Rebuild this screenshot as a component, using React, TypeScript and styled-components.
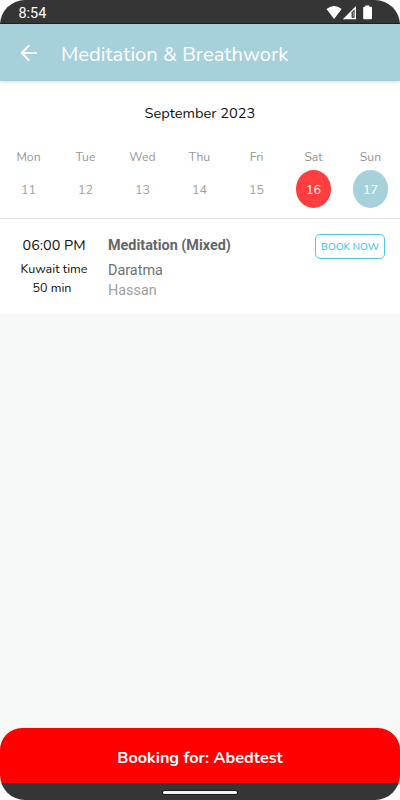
import React from "react";
import styled, { createGlobalStyle } from "styled-components";

const GlobalStyle = createGlobalStyle`
  * { box-sizing: border-box; }
  body { margin: 0; background: #fff; }
`;

const rounded = `Nunito, "Open Sans", "Noto Sans", sans-serif`;

const Screen = styled.div`
  width: 400px;
  height: 800px;
  display: flex;
  flex-direction: column;
  overflow: hidden;
  border-radius: 25px;
  background: #f7f9f8;
  font-family: ${rounded};
`;

const StatusBar = styled.div`
  flex: none;
  height: 24px;
  display: flex;
  align-items: center;
  justify-content: space-between;
  padding: 2px 27px 0 18.5px;
  background: #353535;
  border-bottom: 1px solid #202020;
  color: #fff;
`;

const Clock = styled.span`
  padding-top: 2px;
  font: 400 14.4px/20px Roboto, sans-serif;
`;

const Header = styled.header`
  flex: none;
  position: relative;
  height: 57px;
  display: flex;
  align-items: center;
  padding: 1px 0 0 20px;
  gap: 23px;
  background: #a7d1da;
  box-shadow: 0 1px 3px rgba(0, 0, 0, 0.16);
  color: #fff;
`;

const Title = styled.h1`
  margin: 0;
  padding-top: 3px;
  font-weight: 400;
  font-size: 20.2px;
  line-height: 26px;
  white-space: nowrap;
`;

const Calendar = styled.section`
  flex: none;
  height: 138px;
  background: #fff;
  border-bottom: 1px solid #e6e6e6;
`;

const Month = styled.div`
  padding-top: 22px;
  line-height: 20px;
  font-size: 14.6px;
  text-align: center;
  color: #111;
`;

const Week = styled.div`
  display: grid;
  grid-template-columns: repeat(7, 57px);
  margin-top: 24px;
`;

const Day = styled.div`
  display: flex;
  flex-direction: column;
  align-items: center;
  color: #969696;
  font-size: 12.2px;
  line-height: 21px;
`;

const DayNumber = styled.span<{ $fill?: string }>`
  width: 35.5px;
  height: 37.5px;
  margin-top: 2px;
  padding-top: 1px;
  border-radius: 50%;
  display: flex;
  align-items: center;
  justify-content: center;
  background: ${(p) => p.$fill ?? "transparent"};
  color: ${(p) => (p.$fill ? "#fff" : "#a0a0a0")};
  font-size: 12.5px;
`;

const ClassRow = styled.section`
  flex: none;
  height: 95px;
  display: flex;
  align-items: flex-start;
  background: #fff;
`;

const TimeColumn = styled.div`
  width: 108px;
  padding-top: 15px;
  display: flex;
  flex-direction: column;
  align-items: center;
  color: #111;
`;

const Time = styled.div`
  font-size: 14.4px;
  line-height: 22px;
`;

const TimeNote = styled.div`
  font-size: 12.5px;
  line-height: 19px;
  padding-top: 3px;
  & + & { padding: 0 4px 0 0; }
`;

const Details = styled.div`
  flex: 1;
  padding-top: 16px;
  font-family: Roboto, sans-serif;
  font-size: 14.4px;
  line-height: 20px;
`;

const ClassName = styled.div`
  font-weight: 700;
  line-height: 21px;
  color: #666;
`;

const Teacher = styled.div`
  margin-top: 5px;
  color: #707070;
`;

const Surname = styled.div`
  line-height: 19px;
  color: #a0a0a0;
`;

const BookButton = styled.button`
  width: 70px;
  height: 25px;
  margin: 15px 15px 0 0;
  padding: 1px 0 0;
  border: 1px solid #4fcde5;
  border-radius: 5px;
  background: #fff;
  color: #1fc4e0;
  font-family: ${rounded};
  font-size: 10.2px;
  line-height: 22px;
  white-space: nowrap;
`;

const Spacer = styled.div`
  flex: 1;
`;

const BookingBar = styled.button`
  flex: none;
  height: 56px;
  width: 100%;
  border: 0;
  border-bottom: 1px solid #173f40;
  background: #f00;
  border-radius: 22px 22px 0 0;
  padding: 4px 0 0;
  color: #fff;
  font-family: ${rounded};
  font-weight: 700;
  font-size: 16.2px;
`;

const NavBar = styled.div`
  flex: none;
  height: 16px;
  display: flex;
  justify-content: center;
  align-items: center;
  padding-top: 1px;
  background: #353535;
`;

const HomeHandle = styled.div`
  width: 74px;
  height: 3px;
  border-radius: 2px;
  background: #f4f0ea;
  box-shadow: 0 0 0 1px #1c1c1c;
`;

const days = [
  { name: "Mon", date: 11 },
  { name: "Tue", date: 12 },
  { name: "Wed", date: 13 },
  { name: "Thu", date: 14 },
  { name: "Fri", date: 15 },
  { name: "Sat", date: 16, fill: "#ff3e40" },
  { name: "Sun", date: 17, fill: "#a7d1da" },
];

function StatusIcons() {
  return (
    <svg width="47" height="16" viewBox="0 0 47 16" fill="#fff">
      <path d="M0.5 4 Q8.1 -2 15.7 4 L8.1 14 Z" />
      <path d="M30 1 V14.2 H16.8 Z" />
      <path d="M25.6 7.2 L28.6 4.2 V12.8 H25.6 Z" fill="#353535" />
      <path d="M26.8 6.6 H27.8 V11.8 H26.8 Z" fill="#aaa" />
      <path d="M39.3 0.5 H43.3 V1.7 H45 Q46 1.7 46 2.7 V13.2 Q46 14.2 45 14.2 H38.2 Q37.2 14.2 37.2 13.2 V2.7 Q37.2 1.7 38.2 1.7 H39.3 Z" />
    </svg>
  );
}

function BackArrow() {
  return (
    <svg width="18" height="18" viewBox="0 0 18 18" fill="none" stroke="#fff" strokeWidth="1.9">
      <path d="M17 9 H2 M9.2 1.4 L1.7 9 L9.2 16.6" />
    </svg>
  );
}

export default function App() {
  return (
    <>
      <GlobalStyle />
      <Screen>
        <StatusBar>
          <Clock>8:54</Clock>
          <StatusIcons />
        </StatusBar>
        <Header>
          <BackArrow />
          <Title>Meditation &amp; Breathwork</Title>
        </Header>
        <Calendar>
          <Month>September 2023</Month>
          <Week>
            {days.map((d) => (
              <Day key={d.date}>
                {d.name}
                <DayNumber $fill={d.fill}>{d.date}</DayNumber>
              </Day>
            ))}
          </Week>
        </Calendar>
        <ClassRow>
          <TimeColumn>
            <Time>06:00 PM</Time>
            <TimeNote>Kuwait time</TimeNote>
            <TimeNote>50 min</TimeNote>
          </TimeColumn>
          <Details>
            <ClassName>Meditation (Mixed)</ClassName>
            <Teacher>Daratma</Teacher>
            <Surname>Hassan</Surname>
          </Details>
          <BookButton>BOOK NOW</BookButton>
        </ClassRow>
        <Spacer />
        <BookingBar>Booking for: Abedtest</BookingBar>
        <NavBar>
          <HomeHandle />
        </NavBar>
      </Screen>
    </>
  );
}
